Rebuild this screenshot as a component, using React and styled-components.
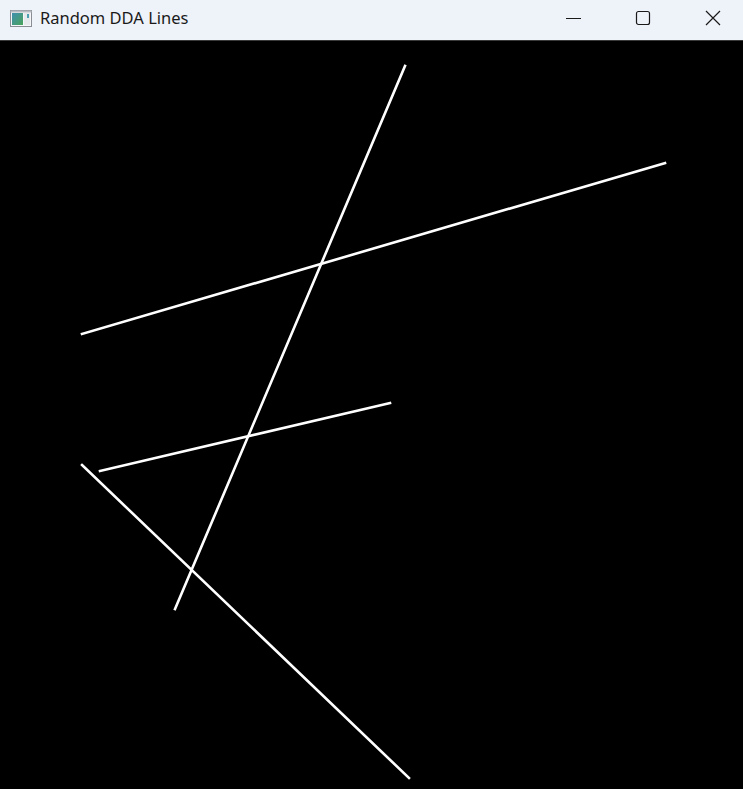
import React from "react";
import styled, { createGlobalStyle } from "styled-components";

const Global = createGlobalStyle`
  html, body {
    margin: 0;
    padding: 0;
    background: #000;
    overflow: hidden;
  }
`;

const Frame = styled.div`
  width: 743px;
  height: 789px;
  display: flex;
  flex-direction: column;
  font-family: "Noto Sans", "Open Sans", sans-serif;
`;

const TitleBar = styled.div`
  height: 40px;
  flex: none;
  display: flex;
  align-items: center;
  background: #eef2f9;
  border-bottom: 1px solid #3a3a3a;
  overflow: hidden;
`;

const AppIcon = styled.svg`
  width: 22px;
  height: 17px;
  margin: 0 8px 0 10px;
  flex: none;
  padding-bottom: 4px;
`;

const Title = styled.div`
  font-size: 16.5px;
  color: #1a1a1a;
  flex: 1;
  padding-bottom: 5px;
`;

const Controls = styled.div`
  display: flex;
  height: 100%;
  margin-right: -5px;
`;

const ControlButton = styled.div`
  width: 70px;
  height: 100%;
  display: flex;
  align-items: center;
  justify-content: center;
  padding-bottom: 5px;
  box-sizing: border-box;
`;

const Canvas = styled.svg`
  flex: 1;
  display: block;
  background: #000;
`;

const lines = [
  [405, 66, 175, 609],
  [82, 334, 665, 163],
  [100, 471, 390, 403],
  [82, 465, 409, 778],
];

export default function App() {
  return (
    <>
      <Global />
      <Frame>
        <TitleBar>
          <AppIcon viewBox="0 0 22 17">
            <defs>
              <linearGradient id="ig" x1="0" y1="0" x2="1" y2="1">
                <stop offset="0" stopColor="#3f8fb0" />
                <stop offset="1" stopColor="#4aa35a" />
              </linearGradient>
            </defs>
            <rect x="0.5" y="0.5" width="21" height="16" fill="#f4f6f8" stroke="#8a8e94" />
            <rect x="2" y="3" width="11" height="12" fill="url(#ig)" />
            <rect x="14" y="3" width="6" height="12" fill="#e6e9ec" />
            <rect x="17" y="4" width="2" height="4" fill="#4aa0b0" />
            <rect x="0.5" y="0.5" width="21" height="2" fill="#b8bcc2" />
          </AppIcon>
          <Title>Random DDA Lines</Title>
          <Controls>
            <ControlButton>
              <svg width="16" height="16" viewBox="0 0 16 16">
                <line x1="1" y1="8.5" x2="16" y2="8.5" stroke="#1a1a1a" strokeWidth="1" />
              </svg>
            </ControlButton>
            <ControlButton>
              <svg width="16" height="16" viewBox="0 0 16 16">
                <rect x="1.5" y="1.5" width="13" height="13" rx="2" fill="none" stroke="#1a1a1a" strokeWidth="1.2" />
              </svg>
            </ControlButton>
            <ControlButton>
              <svg width="16" height="16" viewBox="0 0 16 16">
                <path d="M1 1 L15 15 M15 1 L1 15" stroke="#1a1a1a" strokeWidth="1.2" fill="none" />
              </svg>
            </ControlButton>
          </Controls>
        </TitleBar>
        <Canvas viewBox="0 41 743 748" preserveAspectRatio="none">
          {lines.map(([x1, y1, x2, y2], i) => (
            <line
              key={i}
              x1={x1}
              y1={y1}
              x2={x2}
              y2={y2}
              stroke="#fff"
              strokeWidth="2.6"
              strokeLinecap="square"
            />
          ))}
        </Canvas>
      </Frame>
    </>
  );
}
